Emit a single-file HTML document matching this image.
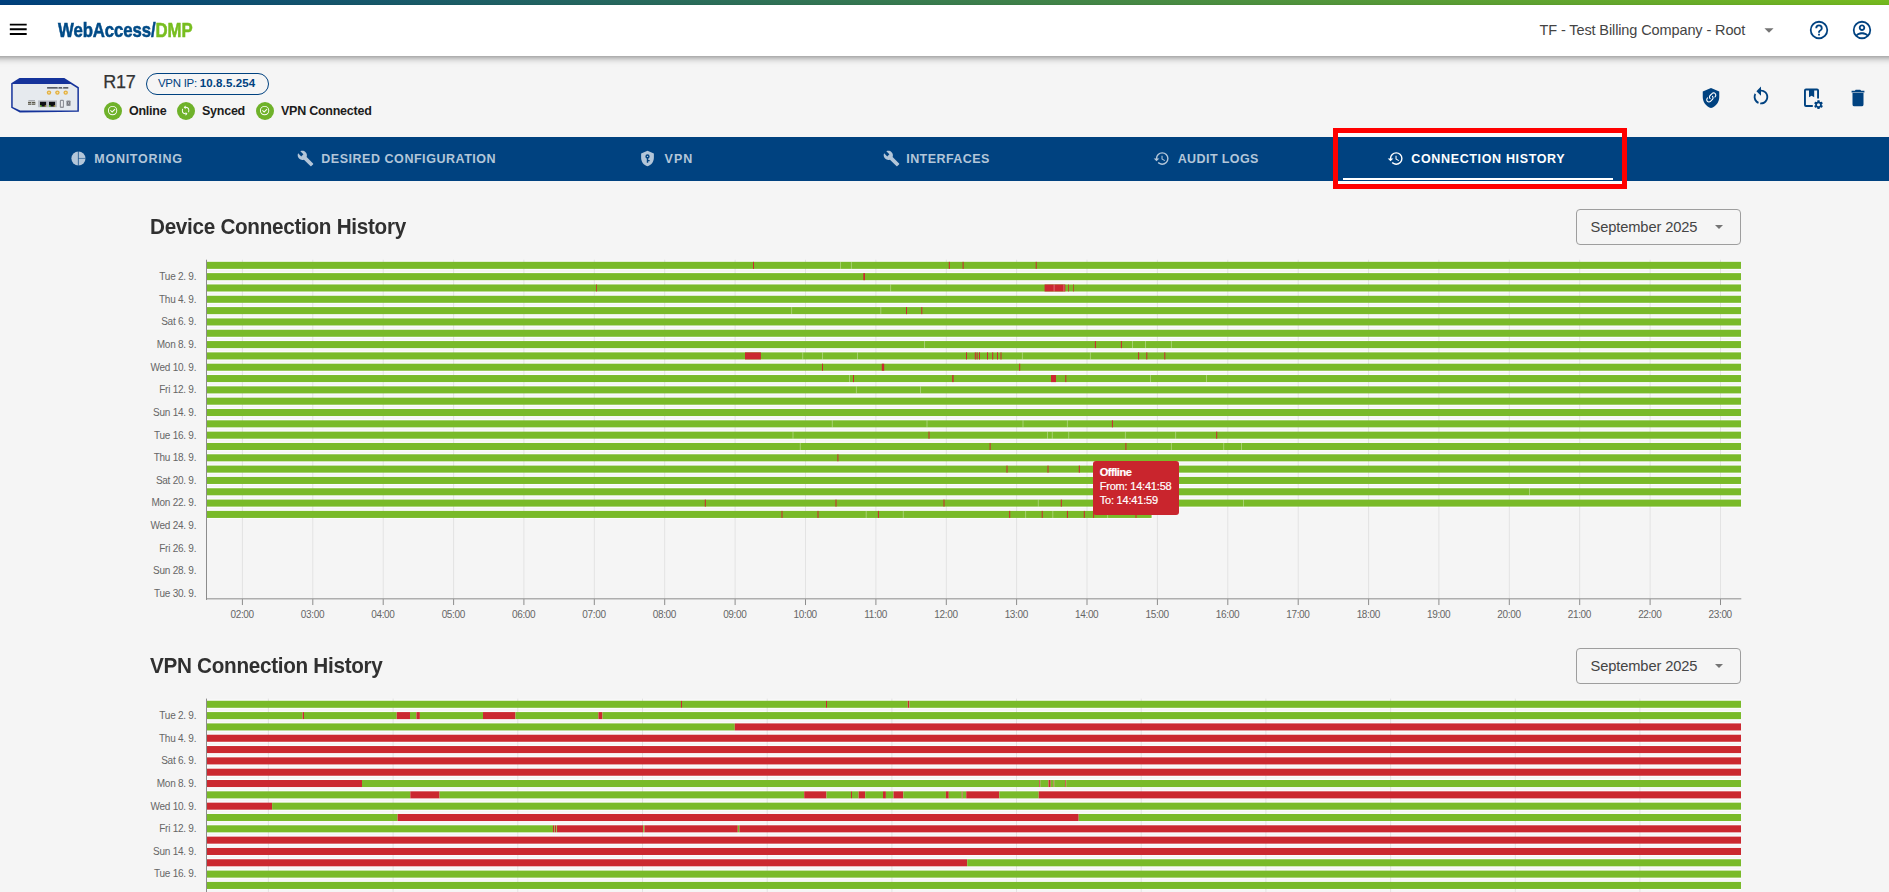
<!DOCTYPE html>
<html lang="en">
<head>
<meta charset="utf-8">
<title>WebAccess/DMP - R17 - Connection History</title>
<style>
*{box-sizing:border-box;margin:0;padding:0}
html,body{width:1889px;height:892px;overflow:hidden;background:#f5f5f5;font-family:"Liberation Sans",sans-serif;color:#333}
.abs,.t{position:absolute;white-space:nowrap}
.t{line-height:1}
#stripe{position:absolute;left:0;top:0;width:1889px;height:5px;background:linear-gradient(90deg,#004280 0%,#78be20 100%)}
#topbar{position:absolute;left:-20px;top:5px;width:1929px;height:51px;background:#fff;box-shadow:0 2px 4px -1px rgba(0,0,0,.2),0 4px 5px 0 rgba(0,0,0,.14),0 1px 10px 0 rgba(0,0,0,.12)}
#nav{position:absolute;left:0;top:137px;width:1889px;height:44px;background:#004280}
.tab{position:absolute;top:0;left:0;height:44px;color:#b3c6d9;font-weight:bold;font-size:12.5px;letter-spacing:0.6px;white-space:nowrap}
.tab span{position:absolute;top:15px;line-height:14px}
.tab svg{position:absolute;top:13.2px;width:17px;height:17px;fill:#b3c6d9}
.tab.on{color:#fff}
.tab.on svg{fill:#fff}
#underline{position:absolute;left:1343px;top:41px;width:270px;height:2px;background:#fff}
#redbox{position:absolute;left:1333px;top:128px;width:294px;height:61px;border:5px solid #ff0000}
.rbfill{position:absolute;left:1338px;width:284px;background:#fbfcfc}
.h{position:absolute;left:150px;font-weight:bold;font-size:22px;letter-spacing:-0.31px;transform-origin:0 0;transform:scaleX(0.94);color:#303030;white-space:nowrap;line-height:1}
.sel{position:absolute;left:1576px;width:165px;height:36px;border:1px solid #9e9e9e;border-radius:4px}
.sel span{position:absolute;left:13.5px;top:10.1px;font-size:14.7px;letter-spacing:-0.13px;color:#444;line-height:1;white-space:nowrap}
.sel i{position:absolute;left:138.3px;top:14.8px;width:0;height:0;border-left:4.7px solid transparent;border-right:4.7px solid transparent;border-top:4.7px solid #757575}
.yl{position:absolute;left:96.2px;margin-top:0.4px;width:100px;text-align:right;font-size:10px;color:#666;line-height:14px;white-space:nowrap;letter-spacing:-0.25px;padding-right:0}
.xl{position:absolute;width:60px;text-align:center;font-size:10px;color:#666;line-height:14px;white-space:nowrap;letter-spacing:-0.35px}
svg.chart{position:absolute;left:0;top:0;width:1889px;height:892px;overflow:hidden}
.pill{position:absolute;left:146px;top:73px;width:123px;height:22px;border:1.4px solid #004280;border-radius:11px}
.dot{position:absolute;top:102px;width:18px;height:18px;border-radius:50%;background:#6fb22a}
.dot svg{position:absolute;left:3.4px;top:3.4px;width:11.2px;height:11.2px;fill:#fff}
.st{position:absolute;top:104.5px;font-size:12.5px;letter-spacing:-0.25px;font-weight:bold;color:#1c1c1c;white-space:nowrap;line-height:1}
.ic{position:absolute;fill:#004280}
#tip{position:absolute;left:1092.7px;top:461px;width:86.3px;height:53.8px;-webkit-text-stroke:0.2px #fff;background:#c9252d;border-radius:3px;color:#fff;font-size:11px;line-height:14px;padding:4px 0 0 7px;white-space:nowrap;letter-spacing:-0.2px}
#tip b{font-weight:bold;letter-spacing:-0.45px}
</style>
</head>
<body>
<div id="stripe"></div>

<!-- device header -->
<svg class="abs" style="left:9px;top:76px;filter:blur(0.35px)" width="72" height="38" viewBox="0 0 72 38">
  <polygon points="2.2,7.2 10.5,2 55.3,2 69.9,11.2 69.9,35.7 10.8,36.4 2.2,31.7" fill="#15339b"/>
  <polygon points="3.7,8.1 61.6,8.1 68.4,12.3 68.4,34.5 11.2,34.5 3.7,31" fill="#e6eaee"/>
  <rect x="38.1" y="11.1" width="21.2" height="1.5" fill="#4a4e58"/>
  <rect x="48.6" y="11.1" width="1" height="1.5" fill="#e6eaee"/><rect x="53" y="11.1" width="1.2" height="1.5" fill="#e6eaee"/>
  <circle cx="40" cy="16.6" r="2.2" fill="#e3b040"/><circle cx="48.4" cy="16.6" r="2.2" fill="#e3b040"/><circle cx="56.7" cy="16.6" r="2.2" fill="#e3b040"/>
  <circle cx="40" cy="16.6" r="0.9" fill="#f6e2a8"/><circle cx="48.4" cy="16.6" r="0.9" fill="#f6e2a8"/><circle cx="56.7" cy="16.6" r="0.9" fill="#f6e2a8"/>
  <rect x="19" y="25.8" width="7.3" height="3" fill="#5d5a4c"/>
  <rect x="19" y="27" width="7.3" height="0.6" fill="#cfd2d2"/>
  <rect x="22.2" y="25.8" width="0.8" height="3" fill="#cfd2d2"/>
  <rect x="19.4" y="24.2" width="6.6" height="0.9" fill="#9a9ca3"/>
  <rect x="29.1" y="24.4" width="18.9" height="6.8" fill="#b9bdc4"/>
  <rect x="31" y="25.8" width="6.1" height="4.8" fill="#0e1014"/>
  <rect x="40" y="25.8" width="6.1" height="4.8" fill="#0e1014"/>
  <rect x="31" y="29.3" width="1.6" height="1.4" fill="#6ed13c"/><rect x="40" y="29.3" width="1.6" height="1.4" fill="#6ed13c"/>
  <rect x="35.7" y="29.3" width="1.4" height="1.4" fill="#b9a53a"/><rect x="44.7" y="29.3" width="1.4" height="1.4" fill="#b9a53a"/>
  <rect x="50.8" y="23.7" width="4.2" height="8.2" rx="1.2" fill="#8f9299"/>
  <rect x="52.1" y="25" width="1.7" height="5.6" fill="#f2f3f5"/>
  <rect x="57.4" y="24.4" width="4.2" height="5.6" rx="0.8" fill="#8b8e95"/>
  <rect x="58.7" y="25.8" width="1.5" height="2.6" fill="#3c3e44"/>
  <rect x="59.1" y="26" width="0.7" height="2.2" fill="#dfe1e5"/>
</svg>
<div class="t" id="t_r17" style="left:103.3px;top:72.5px;font-size:18px;letter-spacing:-0.3px;color:#333;-webkit-text-stroke:0.25px #333">R17</div>
<div class="pill"></div>
<div class="t" id="t_vpnip" style="left:158px;top:78px;font-size:11.5px;color:#004280;letter-spacing:-0.3px">VPN IP: <b style="letter-spacing:0.13px">10.8.5.254</b></div>
<div class="dot" style="left:104px"><svg viewBox="0 0 24 24"><path d="M12,2A10,10 0 0,1 22,12A10,10 0 0,1 12,22A10,10 0 0,1 2,12A10,10 0 0,1 12,2M12,4A8,8 0 0,0 4,12A8,8 0 0,0 12,20A8,8 0 0,0 20,12A8,8 0 0,0 12,4M11,16.5L6.5,12L7.91,10.59L11,13.67L16.59,8.09L18,9.5L11,16.5Z"/></svg></div>
<div class="st" id="t_online" style="left:129px">Online</div>
<div class="dot" style="left:177px"><svg viewBox="0 0 24 24"><path d="M12,18A6,6 0 0,1 6,12C6,11 6.25,10.03 6.7,9.2L5.24,7.74C4.46,8.97 4,10.43 4,12A8,8 0 0,0 12,20V23L16,19L12,15M12,4V1L8,5L12,9V6A6,6 0 0,1 18,12C18,13 17.75,13.97 17.3,14.8L18.76,16.26C19.54,15.03 20,13.57 20,12A8,8 0 0,0 12,4Z"/></svg></div>
<div class="st" id="t_synced" style="left:202px">Synced</div>
<div class="dot" style="left:256px"><svg viewBox="0 0 24 24"><path d="M12,2A10,10 0 0,1 22,12A10,10 0 0,1 12,22A10,10 0 0,1 2,12A10,10 0 0,1 12,2M12,4A8,8 0 0,0 4,12A8,8 0 0,0 12,20A8,8 0 0,0 20,12A8,8 0 0,0 12,4M11,16.5L6.5,12L7.91,10.59L11,13.67L16.59,8.09L18,9.5L11,16.5Z"/></svg></div>
<div class="st" id="t_vpnc" style="left:281px">VPN Connected</div>

<!-- device action icons -->
<svg class="ic" style="left:1700.2px;top:86.7px" width="22" height="22" viewBox="0 0 24 24"><path d="M12,1L3,5V11C3,16.55 6.84,21.74 12,23C17.16,21.74 21,16.55 21,11V5L12,1Z"/><path fill="#fff" transform="translate(12.3,11.4) scale(0.6) translate(-12,-12)" d="M10.59,13.41C11,13.8 11,14.44 10.59,14.83C10.2,15.22 9.56,15.22 9.17,14.83C7.22,12.88 7.22,9.71 9.17,7.76V7.76L12.71,4.22C14.66,2.27 17.83,2.27 19.78,4.22C21.73,6.17 21.73,9.34 19.78,11.29L18.29,12.78C18.3,11.96 18.17,11.14 17.89,10.36L18.36,9.88C19.54,8.71 19.54,6.81 18.36,5.64C17.19,4.46 15.29,4.46 14.12,5.64L10.59,9.17C9.41,10.34 9.41,12.24 10.59,13.41M13.41,9.17C13.8,8.78 14.44,8.78 14.83,9.17C16.78,11.12 16.78,14.29 14.83,16.24V16.24L11.29,19.78C9.34,21.73 6.17,21.73 4.22,19.78C2.27,17.83 2.27,14.66 4.22,12.71L5.71,11.22C5.7,12.04 5.83,12.86 6.11,13.65L5.64,14.12C4.46,15.29 4.46,17.19 5.64,18.36C6.81,19.54 8.71,19.54 9.88,18.36L13.41,14.83C14.59,13.66 14.59,11.76 13.41,10.59C13,10.2 13,9.56 13.41,9.17Z"/></svg>
<svg class="ic" style="left:1750.4px;top:86.3px" width="22" height="22" viewBox="0 0 24 24"><path d="M12,4C14.1,4 16.1,4.8 17.6,6.3C20.7,9.4 20.7,14.5 17.6,17.6C15.8,19.5 13.3,20.2 10.9,19.9L11.4,17.9C13.1,18.1 14.9,17.5 16.2,16.2C18.5,13.9 18.5,10.1 16.2,7.7C15.1,6.6 13.5,6 12,6V10.6L7,5.6L12,0.6V4M6.3,17.6C3.7,15 3.3,11 5.1,7.9L6.6,9.4C5.5,11.6 5.9,14.4 7.8,16.2C8.3,16.7 8.9,17.1 9.6,17.4L9,19.4C8,19 7.1,18.4 6.3,17.6Z"/></svg>
<svg class="ic" style="left:1801px;top:86.5px" width="24" height="24" viewBox="0 0 24 24"><path d="M5,1.6H16A2,2 0 0,1 18,3.600V11.4H16.100V3.500H13.2V10.3L10.600,8.700L8,10.3V3.500H4.900V18H11.800V19.900H5A2,2 0 0,1 3,17.900V3.600A2,2 0 0,1 5,1.600Z"/><path transform="translate(17.5,17.7) scale(0.44) translate(-12,-12)" d="M12,15.5A3.5,3.5 0 0,1 8.5,12A3.5,3.5 0 0,1 12,8.5A3.5,3.5 0 0,1 15.5,12A3.5,3.5 0 0,1 12,15.5M19.43,12.97C19.47,12.65 19.5,12.33 19.5,12C19.5,11.67 19.47,11.34 19.43,11L21.54,9.37C21.73,9.22 21.78,8.95 21.66,8.73L19.66,5.27C19.54,5.05 19.27,4.96 19.05,5.05L16.56,6.05C16.04,5.66 15.5,5.32 14.87,5.07L14.5,2.42C14.46,2.18 14.25,2 14,2H10C9.75,2 9.54,2.18 9.5,2.42L9.13,5.07C8.5,5.32 7.96,5.66 7.44,6.05L4.95,5.05C4.73,4.96 4.46,5.05 4.34,5.27L2.34,8.73C2.21,8.95 2.27,9.22 2.46,9.37L4.57,11C4.53,11.34 4.5,11.67 4.5,12C4.5,12.33 4.53,12.65 4.57,12.97L2.46,14.63C2.27,14.78 2.21,15.05 2.34,15.27L4.34,18.73C4.46,18.95 4.73,19.03 4.95,18.95L7.44,17.94C7.96,18.34 8.5,18.68 9.13,18.93L9.5,21.58C9.54,21.82 9.75,22 10,22H14C14.25,22 14.46,21.82 14.5,21.58L14.87,18.93C15.5,18.67 16.04,18.34 16.56,17.94L19.05,18.95C19.27,19.03 19.54,18.95 19.66,18.73L21.66,15.27C21.78,15.05 21.73,14.78 21.54,14.63L19.43,12.97Z"/></svg>
<svg class="ic" style="left:1847px;top:86.5px" width="22" height="22" viewBox="0 0 24 24"><path d="M19,4H15.5L14.5,3H9.500L8.5,4H5V6H19M6,19A2,2 0 0,0 8,21H16A2,2 0 0,0 18,19V6.600H6V19Z"/></svg>

<!-- nav -->
<div id="nav">
  <div class="tab"><svg style="left:69.95px;top:13.2px;width:16.9px;height:16.9px" viewBox="0 0 24 24"><circle cx="12" cy="12" r="10"/><path d="M11.9,1.5V22.5" stroke="#004280" stroke-width="1" fill="none"/><path d="M12,12H22.5" stroke="#004280" stroke-width="0.75" fill="none"/></svg><span style="left:94.28px;letter-spacing:0.74px">MONITORING</span></div>
  <div class="tab"><svg style="left:296.5px" viewBox="0 0 24 24"><path d="M22.7,19L13.6,9.9C14.5,7.6 14,4.9 12.1,3C10.1,1 7.1,0.6 4.700,1.700L9,6L6,9L1.600,4.700C0.4,7.1 0.9,10.1 2.9,12.1C4.8,14 7.5,14.5 9.8,13.6L18.9,22.7C19.3,23.1 19.9,23.1 20.3,22.7L22.6,20.4C23.1,20 23.1,19.3 22.7,19Z"/></svg><span style="left:321.19px;letter-spacing:0.54px">DESIRED CONFIGURATION</span></div>
  <div class="tab"><svg style="left:639.1px" viewBox="0 0 24 24"><path d="M12,8A1,1 0 0,1 13,9A1,1 0 0,1 12,10A1,1 0 0,1 11,9A1,1 0 0,1 12,8M21,11C21,16.55 17.16,21.74 12,23C6.84,21.74 3,16.55 3,11V5L12,1L21,5V11M12,6A3,3 0 0,0 9,9C9,10.31 9.83,11.42 11,11.83V18H13V16H15V14H13V11.83C14.17,11.42 15,10.31 15,9A3,3 0 0,0 12,6Z"/></svg><span style="left:664.48px;letter-spacing:1.1px">VPN</span></div>
  <div class="tab"><svg style="left:882.7px" viewBox="0 0 24 24"><path d="M22.7,19L13.6,9.9C14.5,7.6 14,4.9 12.1,3C10.1,1 7.1,0.6 4.700,1.700L9,6L6,9L1.600,4.700C0.4,7.1 0.9,10.1 2.9,12.1C4.8,14 7.5,14.5 9.8,13.6L18.9,22.7C19.3,23.1 19.9,23.1 20.3,22.7L22.6,20.4C23.1,20 23.1,19.3 22.7,19Z"/></svg><span style="left:906.25px;letter-spacing:0.43px">INTERFACES</span></div>
  <div class="tab"><svg style="left:1153.2px" viewBox="0 0 24 24"><path d="M13.5,8H12V13L16.28,15.54L17,14.33L13.5,12.25V8M13,3A9,9 0 0,0 4,12H1L4.960,16.030L9,12H6A7,7 0 0,1 13,5A7,7 0 0,1 20,12A7,7 0 0,1 13,19C11.07,19 9.320,18.210 8.060,16.940L6.640,18.360C8.270,20 10.5,21 13,21A9,9 0 0,0 22,12A9,9 0 0,0 13,3"/></svg><span style="left:1177.7px;letter-spacing:0.41px">AUDIT LOGS</span></div>
  <div class="tab on"><svg style="left:1386.8px" viewBox="0 0 24 24"><path d="M13.5,8H12V13L16.28,15.54L17,14.33L13.5,12.25V8M13,3A9,9 0 0,0 4,12H1L4.960,16.030L9,12H6A7,7 0 0,1 13,5A7,7 0 0,1 20,12A7,7 0 0,1 13,19C11.07,19 9.320,18.210 8.060,16.940L6.640,18.360C8.270,20 10.5,21 13,21A9,9 0 0,0 22,12A9,9 0 0,0 13,3"/></svg><span style="left:1411.25px;letter-spacing:0.65px">CONNECTION HISTORY</span></div>
  <div id="underline"></div>
</div>
<div class="rbfill" style="top:133px;height:4px"></div>
<div class="rbfill" style="top:181px;height:3px"></div>
<div id="redbox"></div>

<!-- top bar (after nav so shadow is on top of page bg) -->
<div id="topbar"></div>
<svg class="abs" style="left:7.2px;top:18.3px" width="22.5" height="22.5" viewBox="0 0 24 24" fill="#000"><path d="M3,6H21V8H3V6M3,11H21V13H3V11M3,16H21V18H3V16Z"/></svg>
<div class="t" id="t_logo" style="left:58.3px;top:20.3px;font-size:20.5px;font-weight:bold;color:#004b87;-webkit-text-stroke:0.55px currentColor;transform-origin:0 0;transform:scaleX(0.817);letter-spacing:-0.1px">WebAccess/<span style="color:#78be20">DMP</span></div>
<div class="t" id="t_company" style="left:1539.5px;top:22.5px;font-size:14.5px;letter-spacing:-0.11px;color:#444">TF - Test Billing Company - Root</div>
<svg class="abs" style="left:1758.2px;top:18.7px" width="22" height="22" viewBox="0 0 24 24" fill="#757575"><path d="M7,10L12,15L17,10H7Z"/></svg>
<svg class="ic" style="left:1808px;top:18.8px" width="22" height="22" viewBox="0 0 24 24"><path d="M11,18H13V16H11V18M12,2A10,10 0 0,0 2,12A10,10 0 0,0 12,22A10,10 0 0,0 22,12A10,10 0 0,0 12,2M12,20C7.59,20 4,16.41 4,12C4,7.59 7.59,4 12,4C16.41,4 20,7.59 20,12C20,16.41 16.41,20 12,20M12,6A4,4 0 0,0 8,10H10A2,2 0 0,1 12,8A2,2 0 0,1 14,10C14,12 11,11.75 11,15H13C13,12.75 16,12.5 16,10A4,4 0 0,0 12,6Z"/></svg>
<svg class="ic" style="left:1851.2px;top:18.8px" width="22" height="22" viewBox="0 0 24 24"><path d="M12,2A10,10 0 0,0 2,12A10,10 0 0,0 12,22A10,10 0 0,0 22,12A10,10 0 0,0 12,2M7.07,18.28C7.5,17.38 10.12,16.5 12,16.5C13.88,16.5 16.5,17.38 16.93,18.28C15.57,19.36 13.86,20 12,20C10.14,20 8.43,19.36 7.07,18.28M18.36,16.83C16.93,15.09 13.46,14.5 12,14.5C10.54,14.5 7.07,15.09 5.64,16.83C4.62,15.5 4,13.82 4,12C4,7.59 7.59,4 12,4C16.41,4 20,7.59 20,12C20,13.82 19.38,15.5 18.36,16.83M12,6C10.06,6 8.5,7.56 8.5,9.5C8.5,11.44 10.06,13 12,13C13.94,13 15.5,11.44 15.5,9.5C15.5,7.56 13.94,6 12,6M12,11A1.5,1.5 0 0,1 10.5,9.5A1.5,1.5 0 0,1 12,8A1.5,1.5 0 0,1 13.5,9.5A1.5,1.5 0 0,1 12,11Z"/></svg>

<!-- charts -->
<div class="h" id="t_h1" style="top:216.4px">Device Connection History</div>
<div class="sel" style="top:209px"><span>September 2025</span><i></i></div>
<div class="h" id="t_h2" style="top:655.4px">VPN Connection History</div>
<div class="sel" style="top:648px"><span>September 2025</span><i></i></div>

<svg class="chart" viewBox="0 0 1889 892">
<rect x="207.0" y="260.61" width="1534.0" height="9.45" fill="#fcfcfd"/>
<rect x="207.0" y="271.93" width="1534.0" height="9.45" fill="#fcfcfd"/>
<rect x="207.0" y="283.25" width="1534.0" height="9.45" fill="#fcfcfd"/>
<rect x="207.0" y="294.57" width="1534.0" height="9.45" fill="#fcfcfd"/>
<rect x="207.0" y="305.89" width="1534.0" height="9.45" fill="#fcfcfd"/>
<rect x="207.0" y="317.22" width="1534.0" height="9.45" fill="#fcfcfd"/>
<rect x="207.0" y="328.54" width="1534.0" height="9.45" fill="#fcfcfd"/>
<rect x="207.0" y="339.86" width="1534.0" height="9.45" fill="#fcfcfd"/>
<rect x="207.0" y="351.18" width="1534.0" height="9.45" fill="#fcfcfd"/>
<rect x="207.0" y="362.50" width="1534.0" height="9.45" fill="#fcfcfd"/>
<rect x="207.0" y="373.83" width="1534.0" height="9.45" fill="#fcfcfd"/>
<rect x="207.0" y="385.15" width="1534.0" height="9.45" fill="#fcfcfd"/>
<rect x="207.0" y="396.47" width="1534.0" height="9.45" fill="#fcfcfd"/>
<rect x="207.0" y="407.79" width="1534.0" height="9.45" fill="#fcfcfd"/>
<rect x="207.0" y="419.11" width="1534.0" height="9.45" fill="#fcfcfd"/>
<rect x="207.0" y="430.44" width="1534.0" height="9.45" fill="#fcfcfd"/>
<rect x="207.0" y="441.76" width="1534.0" height="9.45" fill="#fcfcfd"/>
<rect x="207.0" y="453.08" width="1534.0" height="9.45" fill="#fcfcfd"/>
<rect x="207.0" y="464.40" width="1534.0" height="9.45" fill="#fcfcfd"/>
<rect x="207.0" y="475.72" width="1534.0" height="9.45" fill="#fcfcfd"/>
<rect x="207.0" y="487.05" width="1534.0" height="9.45" fill="#fcfcfd"/>
<rect x="207.0" y="498.37" width="1534.0" height="9.45" fill="#fcfcfd"/>
<rect x="207.0" y="509.69" width="945.6" height="9.45" fill="#fcfcfd"/>
<rect x="241.9" y="259.7" width="1" height="339.7" fill="#e3e3e3"/>
<rect x="312.3" y="259.7" width="1" height="339.7" fill="#e3e3e3"/>
<rect x="382.7" y="259.7" width="1" height="339.7" fill="#e3e3e3"/>
<rect x="453.1" y="259.7" width="1" height="339.7" fill="#e3e3e3"/>
<rect x="523.4" y="259.7" width="1" height="339.7" fill="#e3e3e3"/>
<rect x="593.8" y="259.7" width="1" height="339.7" fill="#e3e3e3"/>
<rect x="664.2" y="259.7" width="1" height="339.7" fill="#e3e3e3"/>
<rect x="734.6" y="259.7" width="1" height="339.7" fill="#e3e3e3"/>
<rect x="805.0" y="259.7" width="1" height="339.7" fill="#e3e3e3"/>
<rect x="875.4" y="259.7" width="1" height="339.7" fill="#e3e3e3"/>
<rect x="945.8" y="259.7" width="1" height="339.7" fill="#e3e3e3"/>
<rect x="1016.1" y="259.7" width="1" height="339.7" fill="#e3e3e3"/>
<rect x="1086.5" y="259.7" width="1" height="339.7" fill="#e3e3e3"/>
<rect x="1156.9" y="259.7" width="1" height="339.7" fill="#e3e3e3"/>
<rect x="1227.3" y="259.7" width="1" height="339.7" fill="#e3e3e3"/>
<rect x="1297.7" y="259.7" width="1" height="339.7" fill="#e3e3e3"/>
<rect x="1368.1" y="259.7" width="1" height="339.7" fill="#e3e3e3"/>
<rect x="1438.4" y="259.7" width="1" height="339.7" fill="#e3e3e3"/>
<rect x="1508.8" y="259.7" width="1" height="339.7" fill="#e3e3e3"/>
<rect x="1579.2" y="259.7" width="1" height="339.7" fill="#e3e3e3"/>
<rect x="1649.6" y="259.7" width="1" height="339.7" fill="#e3e3e3"/>
<rect x="1720.0" y="259.7" width="1" height="339.7" fill="#e3e3e3"/>
<rect x="207.0" y="261.81" width="1534.0" height="7.05" fill="#79ba29"/>
<rect x="753.0" y="261.81" width="1.0" height="7.05" fill="#cb2830"/>
<rect x="948.8" y="261.81" width="1.0" height="7.05" fill="#cb2830"/>
<rect x="962.6" y="261.81" width="1.0" height="7.05" fill="#cb2830"/>
<rect x="1035.7" y="261.81" width="1.0" height="7.05" fill="#cb2830"/>
<rect x="840.0" y="261.81" width="1" height="7.05" fill="#ffffff" fill-opacity="0.33"/>
<rect x="850.9" y="261.81" width="1" height="7.05" fill="#ffffff" fill-opacity="0.33"/>
<rect x="207.0" y="273.13" width="1534.0" height="7.05" fill="#79ba29"/>
<rect x="863.3" y="273.13" width="1.7" height="7.05" fill="#cb2830"/>
<rect x="207.0" y="284.45" width="1534.0" height="7.05" fill="#79ba29"/>
<rect x="596.2" y="284.45" width="0.8" height="7.05" fill="#cb2830"/>
<rect x="1044.6" y="284.45" width="20.7" height="7.05" fill="#cb2830"/>
<rect x="1068.1" y="284.45" width="0.7" height="7.05" fill="#cb2830"/>
<rect x="1073.3" y="284.45" width="0.7" height="7.05" fill="#cb2830"/>
<rect x="890.1" y="284.45" width="1" height="7.05" fill="#ffffff" fill-opacity="0.33"/>
<rect x="1053.6" y="284.45" width="1" height="7.05" fill="#ffffff" fill-opacity="0.33"/>
<rect x="1063.4" y="284.45" width="1" height="7.05" fill="#ffffff" fill-opacity="0.33"/>
<rect x="207.0" y="295.77" width="1534.0" height="7.05" fill="#79ba29"/>
<rect x="207.0" y="307.09" width="1534.0" height="7.05" fill="#79ba29"/>
<rect x="906.0" y="307.09" width="1.0" height="7.05" fill="#cb2830"/>
<rect x="921.3" y="307.09" width="1.0" height="7.05" fill="#cb2830"/>
<rect x="791.1" y="307.09" width="1" height="7.05" fill="#ffffff" fill-opacity="0.33"/>
<rect x="880.3" y="307.09" width="1" height="7.05" fill="#ffffff" fill-opacity="0.33"/>
<rect x="207.0" y="318.42" width="1534.0" height="7.05" fill="#79ba29"/>
<rect x="207.0" y="329.74" width="1534.0" height="7.05" fill="#79ba29"/>
<rect x="207.0" y="341.06" width="1534.0" height="7.05" fill="#79ba29"/>
<rect x="1094.9" y="341.06" width="1.0" height="7.05" fill="#cb2830"/>
<rect x="1120.9" y="341.06" width="1.0" height="7.05" fill="#cb2830"/>
<rect x="924.0" y="341.06" width="1" height="7.05" fill="#ffffff" fill-opacity="0.33"/>
<rect x="1132.0" y="341.06" width="1" height="7.05" fill="#ffffff" fill-opacity="0.33"/>
<rect x="1145.0" y="341.06" width="1" height="7.05" fill="#ffffff" fill-opacity="0.33"/>
<rect x="1170.9" y="341.06" width="1" height="7.05" fill="#ffffff" fill-opacity="0.33"/>
<rect x="207.0" y="352.38" width="1534.0" height="7.05" fill="#79ba29"/>
<rect x="745.0" y="352.38" width="15.9" height="7.05" fill="#cb2830"/>
<rect x="966.0" y="352.38" width="1.0" height="7.05" fill="#cb2830"/>
<rect x="974.8" y="352.38" width="1.0" height="7.05" fill="#cb2830"/>
<rect x="976.6" y="352.38" width="1.0" height="7.05" fill="#cb2830"/>
<rect x="979.0" y="352.38" width="1.0" height="7.05" fill="#cb2830"/>
<rect x="987.0" y="352.38" width="1.0" height="7.05" fill="#cb2830"/>
<rect x="992.2" y="352.38" width="1.0" height="7.05" fill="#cb2830"/>
<rect x="997.0" y="352.38" width="1.0" height="7.05" fill="#cb2830"/>
<rect x="1000.5" y="352.38" width="1.0" height="7.05" fill="#cb2830"/>
<rect x="1138.1" y="352.38" width="1.0" height="7.05" fill="#cb2830"/>
<rect x="1146.3" y="352.38" width="1.0" height="7.05" fill="#cb2830"/>
<rect x="1164.3" y="352.38" width="1.0" height="7.05" fill="#cb2830"/>
<rect x="802.2" y="352.38" width="1" height="7.05" fill="#ffffff" fill-opacity="0.33"/>
<rect x="822.0" y="352.38" width="1" height="7.05" fill="#ffffff" fill-opacity="0.33"/>
<rect x="857.0" y="352.38" width="1" height="7.05" fill="#ffffff" fill-opacity="0.33"/>
<rect x="1021.9" y="352.38" width="1" height="7.05" fill="#ffffff" fill-opacity="0.33"/>
<rect x="1089.9" y="352.38" width="1" height="7.05" fill="#ffffff" fill-opacity="0.33"/>
<rect x="207.0" y="363.70" width="1534.0" height="7.05" fill="#79ba29"/>
<rect x="822.0" y="363.70" width="1.0" height="7.05" fill="#cb2830"/>
<rect x="881.8" y="363.70" width="2.4" height="7.05" fill="#cb2830"/>
<rect x="1019.2" y="363.70" width="1.0" height="7.05" fill="#cb2830"/>
<rect x="207.0" y="375.03" width="1534.0" height="7.05" fill="#79ba29"/>
<rect x="853.0" y="375.03" width="1.0" height="7.05" fill="#cb2830"/>
<rect x="952.2" y="375.03" width="1.4" height="7.05" fill="#cb2830"/>
<rect x="1051.0" y="375.03" width="5.0" height="7.05" fill="#cb2830"/>
<rect x="1065.3" y="375.03" width="1.0" height="7.05" fill="#cb2830"/>
<rect x="849.0" y="375.03" width="1" height="7.05" fill="#ffffff" fill-opacity="0.33"/>
<rect x="1150.0" y="375.03" width="1" height="7.05" fill="#ffffff" fill-opacity="0.33"/>
<rect x="1206.0" y="375.03" width="1" height="7.05" fill="#ffffff" fill-opacity="0.33"/>
<rect x="207.0" y="386.35" width="1534.0" height="7.05" fill="#79ba29"/>
<rect x="855.9" y="386.35" width="1" height="7.05" fill="#ffffff" fill-opacity="0.33"/>
<rect x="920.0" y="386.35" width="1" height="7.05" fill="#ffffff" fill-opacity="0.33"/>
<rect x="207.0" y="397.67" width="1534.0" height="7.05" fill="#79ba29"/>
<rect x="207.0" y="408.99" width="1534.0" height="7.05" fill="#79ba29"/>
<rect x="207.0" y="420.31" width="1534.0" height="7.05" fill="#79ba29"/>
<rect x="1111.9" y="420.31" width="1.0" height="7.05" fill="#cb2830"/>
<rect x="831.8" y="420.31" width="1" height="7.05" fill="#ffffff" fill-opacity="0.33"/>
<rect x="926.5" y="420.31" width="1" height="7.05" fill="#ffffff" fill-opacity="0.33"/>
<rect x="1022.5" y="420.31" width="1" height="7.05" fill="#ffffff" fill-opacity="0.33"/>
<rect x="1066.9" y="420.31" width="1" height="7.05" fill="#ffffff" fill-opacity="0.33"/>
<rect x="207.0" y="431.64" width="1534.0" height="7.05" fill="#79ba29"/>
<rect x="928.5" y="431.64" width="1.0" height="7.05" fill="#cb2830"/>
<rect x="1216.2" y="431.64" width="1.0" height="7.05" fill="#cb2830"/>
<rect x="792.5" y="431.64" width="1" height="7.05" fill="#ffffff" fill-opacity="0.33"/>
<rect x="1047.0" y="431.64" width="1" height="7.05" fill="#ffffff" fill-opacity="0.33"/>
<rect x="1051.8" y="431.64" width="1" height="7.05" fill="#ffffff" fill-opacity="0.33"/>
<rect x="1068.2" y="431.64" width="1" height="7.05" fill="#ffffff" fill-opacity="0.33"/>
<rect x="1124.9" y="431.64" width="1" height="7.05" fill="#ffffff" fill-opacity="0.33"/>
<rect x="1175.1" y="431.64" width="1" height="7.05" fill="#ffffff" fill-opacity="0.33"/>
<rect x="207.0" y="442.96" width="1534.0" height="7.05" fill="#79ba29"/>
<rect x="989.6" y="442.96" width="1.0" height="7.05" fill="#cb2830"/>
<rect x="1125.4" y="442.96" width="1.0" height="7.05" fill="#cb2830"/>
<rect x="799.8" y="442.96" width="1" height="7.05" fill="#ffffff" fill-opacity="0.33"/>
<rect x="1170.9" y="442.96" width="1" height="7.05" fill="#ffffff" fill-opacity="0.33"/>
<rect x="1223.2" y="442.96" width="1" height="7.05" fill="#ffffff" fill-opacity="0.33"/>
<rect x="1241.0" y="442.96" width="1" height="7.05" fill="#ffffff" fill-opacity="0.33"/>
<rect x="207.0" y="454.28" width="1534.0" height="7.05" fill="#79ba29"/>
<rect x="837.4" y="454.28" width="1.0" height="7.05" fill="#cb2830"/>
<rect x="207.0" y="465.60" width="1534.0" height="7.05" fill="#79ba29"/>
<rect x="1006.5" y="465.60" width="1.0" height="7.05" fill="#cb2830"/>
<rect x="1047.5" y="465.60" width="1.0" height="7.05" fill="#cb2830"/>
<rect x="1078.8" y="465.60" width="1.0" height="7.05" fill="#cb2830"/>
<rect x="207.0" y="476.92" width="1534.0" height="7.05" fill="#79ba29"/>
<rect x="207.0" y="488.25" width="1534.0" height="7.05" fill="#79ba29"/>
<rect x="1529.0" y="488.25" width="1" height="7.05" fill="#ffffff" fill-opacity="0.33"/>
<rect x="207.0" y="499.57" width="1534.0" height="7.05" fill="#79ba29"/>
<rect x="704.8" y="499.57" width="1.0" height="7.05" fill="#cb2830"/>
<rect x="835.5" y="499.57" width="1.0" height="7.05" fill="#cb2830"/>
<rect x="943.5" y="499.57" width="1.0" height="7.05" fill="#cb2830"/>
<rect x="1060.8" y="499.57" width="1.0" height="7.05" fill="#cb2830"/>
<rect x="1037.8" y="499.57" width="1" height="7.05" fill="#ffffff" fill-opacity="0.33"/>
<rect x="1243.0" y="499.57" width="1" height="7.05" fill="#ffffff" fill-opacity="0.33"/>
<rect x="207.0" y="510.89" width="944.6" height="7.05" fill="#79ba29"/>
<rect x="781.5" y="510.89" width="1.0" height="7.05" fill="#cb2830"/>
<rect x="817.5" y="510.89" width="1.0" height="7.05" fill="#cb2830"/>
<rect x="877.9" y="510.89" width="1.0" height="7.05" fill="#cb2830"/>
<rect x="1009.2" y="510.89" width="1.0" height="7.05" fill="#cb2830"/>
<rect x="1041.7" y="510.89" width="1.0" height="7.05" fill="#cb2830"/>
<rect x="1066.9" y="510.89" width="1.0" height="7.05" fill="#cb2830"/>
<rect x="1083.8" y="510.89" width="1.0" height="7.05" fill="#cb2830"/>
<rect x="1093.1" y="510.89" width="1.0" height="7.05" fill="#cb2830"/>
<rect x="1135.5" y="510.89" width="1.0" height="7.05" fill="#cb2830"/>
<rect x="865.7" y="510.89" width="1" height="7.05" fill="#ffffff" fill-opacity="0.33"/>
<rect x="902.8" y="510.89" width="1" height="7.05" fill="#ffffff" fill-opacity="0.33"/>
<rect x="1025.1" y="510.89" width="1" height="7.05" fill="#ffffff" fill-opacity="0.33"/>
<rect x="1052.3" y="510.89" width="1" height="7.05" fill="#ffffff" fill-opacity="0.33"/>
<rect x="1107.1" y="510.89" width="1" height="7.05" fill="#ffffff" fill-opacity="0.33"/>
<rect x="206" y="259.7" width="1" height="340.2" fill="#8c8c8c"/>
<rect x="206" y="598.33" width="1535.3" height="1" fill="#8c8c8c"/>
<rect x="241.9" y="599.13" width="1" height="5.9" fill="#8c8c8c"/>
<rect x="312.3" y="599.13" width="1" height="5.9" fill="#8c8c8c"/>
<rect x="382.7" y="599.13" width="1" height="5.9" fill="#8c8c8c"/>
<rect x="453.1" y="599.13" width="1" height="5.9" fill="#8c8c8c"/>
<rect x="523.4" y="599.13" width="1" height="5.9" fill="#8c8c8c"/>
<rect x="593.8" y="599.13" width="1" height="5.9" fill="#8c8c8c"/>
<rect x="664.2" y="599.13" width="1" height="5.9" fill="#8c8c8c"/>
<rect x="734.6" y="599.13" width="1" height="5.9" fill="#8c8c8c"/>
<rect x="805.0" y="599.13" width="1" height="5.9" fill="#8c8c8c"/>
<rect x="875.4" y="599.13" width="1" height="5.9" fill="#8c8c8c"/>
<rect x="945.8" y="599.13" width="1" height="5.9" fill="#8c8c8c"/>
<rect x="1016.1" y="599.13" width="1" height="5.9" fill="#8c8c8c"/>
<rect x="1086.5" y="599.13" width="1" height="5.9" fill="#8c8c8c"/>
<rect x="1156.9" y="599.13" width="1" height="5.9" fill="#8c8c8c"/>
<rect x="1227.3" y="599.13" width="1" height="5.9" fill="#8c8c8c"/>
<rect x="1297.7" y="599.13" width="1" height="5.9" fill="#8c8c8c"/>
<rect x="1368.1" y="599.13" width="1" height="5.9" fill="#8c8c8c"/>
<rect x="1438.4" y="599.13" width="1" height="5.9" fill="#8c8c8c"/>
<rect x="1508.8" y="599.13" width="1" height="5.9" fill="#8c8c8c"/>
<rect x="1579.2" y="599.13" width="1" height="5.9" fill="#8c8c8c"/>
<rect x="1649.6" y="599.13" width="1" height="5.9" fill="#8c8c8c"/>
<rect x="1720.0" y="599.13" width="1" height="5.9" fill="#8c8c8c"/>
<rect x="207.0" y="699.56" width="1534.0" height="9.45" fill="#fcfcfd"/>
<rect x="207.0" y="710.88" width="1534.0" height="9.45" fill="#fcfcfd"/>
<rect x="207.0" y="722.20" width="1534.0" height="9.45" fill="#fcfcfd"/>
<rect x="207.0" y="733.52" width="1534.0" height="9.45" fill="#fcfcfd"/>
<rect x="207.0" y="744.84" width="1534.0" height="9.45" fill="#fcfcfd"/>
<rect x="207.0" y="756.17" width="1534.0" height="9.45" fill="#fcfcfd"/>
<rect x="207.0" y="767.49" width="1534.0" height="9.45" fill="#fcfcfd"/>
<rect x="207.0" y="778.81" width="1534.0" height="9.45" fill="#fcfcfd"/>
<rect x="207.0" y="790.13" width="1534.0" height="9.45" fill="#fcfcfd"/>
<rect x="207.0" y="801.45" width="1534.0" height="9.45" fill="#fcfcfd"/>
<rect x="207.0" y="812.78" width="1534.0" height="9.45" fill="#fcfcfd"/>
<rect x="207.0" y="824.10" width="1534.0" height="9.45" fill="#fcfcfd"/>
<rect x="207.0" y="835.42" width="1534.0" height="9.45" fill="#fcfcfd"/>
<rect x="207.0" y="846.74" width="1534.0" height="9.45" fill="#fcfcfd"/>
<rect x="207.0" y="858.06" width="1534.0" height="9.45" fill="#fcfcfd"/>
<rect x="207.0" y="869.39" width="1534.0" height="9.45" fill="#fcfcfd"/>
<rect x="207.0" y="880.71" width="1534.0" height="9.45" fill="#fcfcfd"/>
<rect x="267.9" y="698.6" width="1" height="339.7" fill="#e3e3e3"/>
<rect x="392.6" y="698.6" width="1" height="339.7" fill="#e3e3e3"/>
<rect x="517.3" y="698.6" width="1" height="339.7" fill="#e3e3e3"/>
<rect x="642.0" y="698.6" width="1" height="339.7" fill="#e3e3e3"/>
<rect x="766.7" y="698.6" width="1" height="339.7" fill="#e3e3e3"/>
<rect x="891.4" y="698.6" width="1" height="339.7" fill="#e3e3e3"/>
<rect x="1016.0" y="698.6" width="1" height="339.7" fill="#e3e3e3"/>
<rect x="1140.7" y="698.6" width="1" height="339.7" fill="#e3e3e3"/>
<rect x="1265.4" y="698.6" width="1" height="339.7" fill="#e3e3e3"/>
<rect x="1390.1" y="698.6" width="1" height="339.7" fill="#e3e3e3"/>
<rect x="1514.8" y="698.6" width="1" height="339.7" fill="#e3e3e3"/>
<rect x="1639.4" y="698.6" width="1" height="339.7" fill="#e3e3e3"/>
<rect x="207.0" y="700.76" width="474.0" height="7.05" fill="#79ba29"/>
<rect x="681.0" y="700.76" width="1.0" height="7.05" fill="#cb2830"/>
<rect x="682.0" y="700.76" width="144.0" height="7.05" fill="#79ba29"/>
<rect x="826.0" y="700.76" width="1.0" height="7.05" fill="#cb2830"/>
<rect x="827.0" y="700.76" width="80.8" height="7.05" fill="#79ba29"/>
<rect x="907.8" y="700.76" width="1.6" height="7.05" fill="#cb2830"/>
<rect x="909.4" y="700.76" width="831.6" height="7.05" fill="#79ba29"/>
<rect x="207.0" y="712.08" width="95.6" height="7.05" fill="#79ba29"/>
<rect x="302.6" y="712.08" width="1.4" height="7.05" fill="#cb2830"/>
<rect x="304.0" y="712.08" width="92.7" height="7.05" fill="#79ba29"/>
<rect x="396.7" y="712.08" width="13.3" height="7.05" fill="#cb2830"/>
<rect x="410.0" y="712.08" width="6.4" height="7.05" fill="#79ba29"/>
<rect x="416.4" y="712.08" width="3.5" height="7.05" fill="#cb2830"/>
<rect x="419.9" y="712.08" width="63.1" height="7.05" fill="#79ba29"/>
<rect x="483.0" y="712.08" width="32.5" height="7.05" fill="#cb2830"/>
<rect x="515.5" y="712.08" width="82.9" height="7.05" fill="#79ba29"/>
<rect x="598.4" y="712.08" width="4.1" height="7.05" fill="#cb2830"/>
<rect x="602.5" y="712.08" width="1138.5" height="7.05" fill="#79ba29"/>
<rect x="207.0" y="723.40" width="527.8" height="7.05" fill="#79ba29"/>
<rect x="734.8" y="723.40" width="1006.2" height="7.05" fill="#cb2830"/>
<rect x="207.0" y="734.72" width="1534.0" height="7.05" fill="#cb2830"/>
<rect x="207.0" y="746.04" width="1534.0" height="7.05" fill="#cb2830"/>
<rect x="207.0" y="757.37" width="1534.0" height="7.05" fill="#cb2830"/>
<rect x="207.0" y="768.69" width="1534.0" height="7.05" fill="#cb2830"/>
<rect x="207.0" y="780.01" width="155.0" height="7.05" fill="#cb2830"/>
<rect x="362.0" y="780.01" width="677.3" height="7.05" fill="#79ba29"/>
<rect x="1039.3" y="780.01" width="1.0" height="7.05" fill="#cb2830"/>
<rect x="1040.3" y="780.01" width="8.2" height="7.05" fill="#79ba29"/>
<rect x="1048.5" y="780.01" width="2.2" height="7.05" fill="#cb2830"/>
<rect x="1050.7" y="780.01" width="2.9" height="7.05" fill="#79ba29"/>
<rect x="1053.6" y="780.01" width="0.6" height="7.05" fill="#cb2830"/>
<rect x="1054.2" y="780.01" width="11.1" height="7.05" fill="#79ba29"/>
<rect x="1065.3" y="780.01" width="0.9" height="7.05" fill="#cb2830"/>
<rect x="1066.2" y="780.01" width="674.8" height="7.05" fill="#79ba29"/>
<rect x="207.0" y="791.33" width="203.3" height="7.05" fill="#79ba29"/>
<rect x="410.3" y="791.33" width="29.3" height="7.05" fill="#cb2830"/>
<rect x="439.6" y="791.33" width="364.6" height="7.05" fill="#79ba29"/>
<rect x="804.2" y="791.33" width="22.3" height="7.05" fill="#cb2830"/>
<rect x="826.5" y="791.33" width="24.5" height="7.05" fill="#79ba29"/>
<rect x="851.0" y="791.33" width="1.0" height="7.05" fill="#cb2830"/>
<rect x="852.0" y="791.33" width="6.6" height="7.05" fill="#79ba29"/>
<rect x="858.6" y="791.33" width="6.6" height="7.05" fill="#cb2830"/>
<rect x="865.2" y="791.33" width="17.8" height="7.05" fill="#79ba29"/>
<rect x="883.0" y="791.33" width="2.9" height="7.05" fill="#cb2830"/>
<rect x="885.9" y="791.33" width="7.6" height="7.05" fill="#79ba29"/>
<rect x="893.5" y="791.33" width="9.8" height="7.05" fill="#cb2830"/>
<rect x="903.3" y="791.33" width="42.6" height="7.05" fill="#79ba29"/>
<rect x="945.9" y="791.33" width="2.9" height="7.05" fill="#cb2830"/>
<rect x="948.8" y="791.33" width="13.0" height="7.05" fill="#79ba29"/>
<rect x="961.8" y="791.33" width="0.8" height="7.05" fill="#cb2830"/>
<rect x="962.6" y="791.33" width="3.6" height="7.05" fill="#79ba29"/>
<rect x="966.2" y="791.33" width="33.1" height="7.05" fill="#cb2830"/>
<rect x="999.3" y="791.33" width="39.4" height="7.05" fill="#79ba29"/>
<rect x="1038.7" y="791.33" width="702.3" height="7.05" fill="#cb2830"/>
<rect x="207.0" y="802.65" width="65.1" height="7.05" fill="#cb2830"/>
<rect x="272.1" y="802.65" width="1468.9" height="7.05" fill="#79ba29"/>
<rect x="207.0" y="813.98" width="190.6" height="7.05" fill="#79ba29"/>
<rect x="397.6" y="813.98" width="681.1" height="7.05" fill="#cb2830"/>
<rect x="1078.7" y="813.98" width="662.3" height="7.05" fill="#79ba29"/>
<rect x="207.0" y="825.30" width="346.0" height="7.05" fill="#79ba29"/>
<rect x="553.0" y="825.30" width="1.2" height="7.05" fill="#cb2830"/>
<rect x="554.2" y="825.30" width="0.7" height="7.05" fill="#79ba29"/>
<rect x="554.9" y="825.30" width="1.4" height="7.05" fill="#cb2830"/>
<rect x="556.3" y="825.30" width="0.7" height="7.05" fill="#79ba29"/>
<rect x="557.0" y="825.30" width="86.2" height="7.05" fill="#cb2830"/>
<rect x="643.2" y="825.30" width="1.2" height="7.05" fill="#79ba29"/>
<rect x="644.4" y="825.30" width="93.4" height="7.05" fill="#cb2830"/>
<rect x="737.8" y="825.30" width="1.6" height="7.05" fill="#79ba29"/>
<rect x="739.4" y="825.30" width="1001.6" height="7.05" fill="#cb2830"/>
<rect x="207.0" y="836.62" width="1534.0" height="7.05" fill="#cb2830"/>
<rect x="207.0" y="847.94" width="1534.0" height="7.05" fill="#cb2830"/>
<rect x="207.0" y="859.26" width="760.2" height="7.05" fill="#cb2830"/>
<rect x="967.2" y="859.26" width="773.8" height="7.05" fill="#79ba29"/>
<rect x="207.0" y="870.59" width="1534.0" height="7.05" fill="#79ba29"/>
<rect x="207.0" y="881.91" width="1534.0" height="7.05" fill="#79ba29"/>
<rect x="206" y="698.6" width="1" height="340.2" fill="#8c8c8c"/>
</svg>
<div class="yl" style="top:269.7px">Tue 2. 9.</div>
<div class="yl" style="top:292.3px">Thu 4. 9.</div>
<div class="yl" style="top:314.9px">Sat 6. 9.</div>
<div class="yl" style="top:337.6px">Mon 8. 9.</div>
<div class="yl" style="top:360.2px">Wed 10. 9.</div>
<div class="yl" style="top:382.9px">Fri 12. 9.</div>
<div class="yl" style="top:405.5px">Sun 14. 9.</div>
<div class="yl" style="top:428.2px">Tue 16. 9.</div>
<div class="yl" style="top:450.8px">Thu 18. 9.</div>
<div class="yl" style="top:473.4px">Sat 20. 9.</div>
<div class="yl" style="top:496.1px">Mon 22. 9.</div>
<div class="yl" style="top:518.7px">Wed 24. 9.</div>
<div class="yl" style="top:541.4px">Fri 26. 9.</div>
<div class="yl" style="top:564.0px">Sun 28. 9.</div>
<div class="yl" style="top:586.7px">Tue 30. 9.</div>
<div class="xl" style="left:212.1px;top:607.6px">02:00</div>
<div class="xl" style="left:282.5px;top:607.6px">03:00</div>
<div class="xl" style="left:352.9px;top:607.6px">04:00</div>
<div class="xl" style="left:423.3px;top:607.6px">05:00</div>
<div class="xl" style="left:493.6px;top:607.6px">06:00</div>
<div class="xl" style="left:564.0px;top:607.6px">07:00</div>
<div class="xl" style="left:634.4px;top:607.6px">08:00</div>
<div class="xl" style="left:704.8px;top:607.6px">09:00</div>
<div class="xl" style="left:775.2px;top:607.6px">10:00</div>
<div class="xl" style="left:845.6px;top:607.6px">11:00</div>
<div class="xl" style="left:916.0px;top:607.6px">12:00</div>
<div class="xl" style="left:986.3px;top:607.6px">13:00</div>
<div class="xl" style="left:1056.7px;top:607.6px">14:00</div>
<div class="xl" style="left:1127.1px;top:607.6px">15:00</div>
<div class="xl" style="left:1197.5px;top:607.6px">16:00</div>
<div class="xl" style="left:1267.9px;top:607.6px">17:00</div>
<div class="xl" style="left:1338.3px;top:607.6px">18:00</div>
<div class="xl" style="left:1408.6px;top:607.6px">19:00</div>
<div class="xl" style="left:1479.0px;top:607.6px">20:00</div>
<div class="xl" style="left:1549.4px;top:607.6px">21:00</div>
<div class="xl" style="left:1619.8px;top:607.6px">22:00</div>
<div class="xl" style="left:1690.2px;top:607.6px">23:00</div>
<div class="yl" style="top:708.6px">Tue 2. 9.</div>
<div class="yl" style="top:731.2px">Thu 4. 9.</div>
<div class="yl" style="top:753.9px">Sat 6. 9.</div>
<div class="yl" style="top:776.5px">Mon 8. 9.</div>
<div class="yl" style="top:799.2px">Wed 10. 9.</div>
<div class="yl" style="top:821.8px">Fri 12. 9.</div>
<div class="yl" style="top:844.5px">Sun 14. 9.</div>
<div class="yl" style="top:867.1px">Tue 16. 9.</div>

<div id="tip"><b>Offline</b><br>From: 14:41:58<br>To: 14:41:59</div>
</body>
</html>
